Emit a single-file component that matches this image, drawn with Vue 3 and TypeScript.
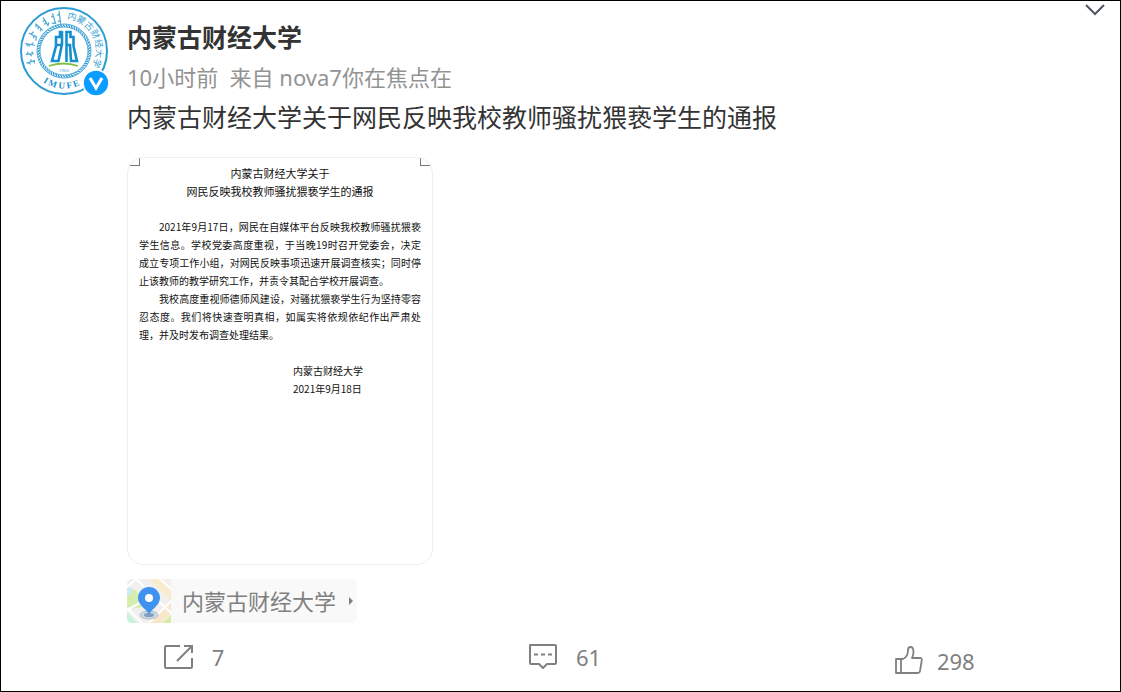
<script setup lang="ts">
interface NoticeLine {
  text: string
  indent?: boolean
  last?: boolean
}

interface ScriptWord {
  angle: number
  d: string
}

const school = '内蒙古财经大学'

const noticeTitle: string[] = ['内蒙古财经大学关于', '网民反映我校教师骚扰猥亵学生的通报']

const noticeBody: NoticeLine[] = [
  { text: '2021年9月17日，网民在自媒体平台反映我校教师骚扰猥亵', indent: true },
  { text: '学生信息。学校党委高度重视，于当晚19时召开党委会，决定' },
  { text: '成立专项工作小组，对网民反映事项迅速开展调查核实；同时停' },
  { text: '止该教师的教学研究工作，并责令其配合学校开展调查。', last: true },
  { text: '我校高度重视师德师风建设，对骚扰猥亵学生行为坚持零容', indent: true },
  { text: '忍态度。我们将快速查明真相，如属实将依规依纪作出严肃处' },
  { text: '理，并及时发布调查处理结果。', last: true },
]

const scriptWords: ScriptWord[] = [
  { angle: -108, d: 'M45 6 V14 M45 7 L43 9 M45 10 L47 11 M45 14 L43 13' },
  { angle: -95, d: 'M45 7 V14 M45 8 L47 9 M45 11 L43 12 M45 14 L47 13' },
  { angle: -79, d: 'M45 6 V15 M45 7 L43 8 M45 9 L43 10 M45 12 L47 13' },
  { angle: -63, d: 'M45 6 V14 L42 15 M45 8 L48 9 M45 11 L43 12' },
  { angle: -46, d: 'M45 6 V15 M45 6 L43 8 M45 9 L43 11 M45 13 L43 14' },
  { angle: -32, d: 'M45 6 V15 M45 8 L43 9 M45 11 L43 12 M45 15 L47 13' },
  { angle: -17, d: 'M45 6 V16 L42 15 M45 8 L43 9' },
  { angle: -7, d: 'M45 5 V17 M45 7 L43 9 M45 14 L43 15' },
]

const ringTicks: number[] = Array.from({ length: 60 }, (_, i) => i * 6)
</script>

<template>
  <main class="page">
    <button class="more" type="button" aria-label="更多">
      <svg width="22" height="14" viewBox="0 0 22 14" fill="none" stroke="#4d5866" stroke-width="2">
        <path d="M2 2 L11 11 L20 2" />
      </svg>
    </button>

    <article class="post">
      <a class="avatar" href="#" :aria-label="school">
        <svg width="90" height="90" viewBox="0 0 90 90">
          <defs>
            <path id="arc-name" d="M48 13 A32 32 0 0 1 72 62" />
            <path id="arc-code" d="M24 76 A37 37 0 0 0 70 73" />
          </defs>
          <circle cx="45" cy="45" r="43" fill="#fff" stroke="#2b9bd3" stroke-width="2" />
          <circle cx="45" cy="45" r="27" fill="none" stroke="#4aa9d9" stroke-width="1" />
          <circle cx="45" cy="45" r="24" fill="none" stroke="#6ab8e0" stroke-width="1" />
          <g stroke="#2b98d0" stroke-width="1.2">
            <path v-for="a in ringTicks" :key="a" d="M44 18.500 L46 21" :transform="`rotate(${a} 45 45)`" />
          </g>
          <g fill="none" stroke="#4ba7d6" stroke-width="1.2" stroke-linecap="round">
            <path
              v-for="word in scriptWords"
              :key="word.angle"
              :d="word.d"
              :transform="`rotate(${word.angle} 45 45)`"
            />
          </g>
          <text class="seal-name"><textPath href="#arc-name">内蒙古财经大学</textPath></text>
          <text class="seal-code"><textPath href="#arc-code">I M U F E</textPath></text>
          <g fill="none" stroke="#168fce" stroke-width="2.6">
            <path d="M43 25 V38 L39.500 55 H33 L37 40 V31 H41 V26 H43 M37 39 H43" />
            <path d="M47.500 56 V26 H51.500 V31 H54.500 V40 L58 55 H52 L51 39 H47.500" />
          </g>
          <path d="M30 60 Q44 55 59 60" fill="none" stroke="#7dbd3a" stroke-width="1.8" />
          <text class="seal-year" x="45" y="66" text-anchor="middle">1960</text>
        </svg>
        <svg class="badge" width="28" height="28" viewBox="0 0 28 28">
          <circle cx="14" cy="14" r="13" fill="#0a9dff" stroke="#fff" stroke-width="1.6" />
          <path d="M8 9 L14 19 L20 9" fill="none" stroke="#fff" stroke-width="3" />
        </svg>
      </a>

      <div class="content">
        <h1 class="name"><a href="#">{{ school }}</a></h1>
        <p class="meta">10小时前&nbsp; 来自 nova7你在焦点在</p>
        <p class="text">内蒙古财经大学关于网民反映我校教师骚扰猥亵学生的通报</p>

        <section class="notice">
          <i class="corner left"></i>
          <i class="corner right"></i>
          <h2 class="notice-title">
            <span v-for="line in noticeTitle" :key="line">{{ line }}</span>
          </h2>
          <div class="notice-body">
            <span
              v-for="line in noticeBody"
              :key="line.text"
              :class="{ indent: line.indent, last: line.last }"
            >{{ line.text }}</span>
          </div>
          <div class="signature">
            <span>{{ school }}</span>
            <span>2021年9月18日</span>
          </div>
        </section>

        <a class="place" href="#">
          <svg class="map" width="44" height="44" viewBox="0 0 44 44">
            <rect width="44" height="44" fill="#f1f0ee" />
            <path d="M0 8 Q10 9 14 20 L17 27 Q8 31 0 28 Z" fill="#d6edb0" />
            <path d="M0 6 Q5 8 5 12 Q4 16 0 16 Z" fill="#c9ebfa" />
            <path d="M22 0 H34 L44 11 V22 Z" fill="#fbebcd" />
            <path d="M22 44 L44 24 V34 L34 44 Z" fill="#f8e8c9" />
            <path d="M35 44 L44 36 V44 Z" fill="#d6edaa" />
            <path d="M0 33 L10 44 H0 Z" fill="#c5f3dc" />
            <path d="M-1 9 L10 -1 M8 -1 L44 34 M32 -1 L44 10 M0 31 L31 14 M2 31 L15 44 M22 44 L44 22" fill="none" stroke="#fff" stroke-width="2" />
            <ellipse cx="22" cy="36" rx="9" ry="4" fill="#b5c4d4" fill-opacity=".6" stroke="#aebdcb" />
            <ellipse cx="22" cy="36" rx="5" ry="2" fill="#7f9ebf" />
            <path d="M22 35 C20 31 11 26 11 19 A11 11 0 1 1 33 19 C33 26 24 31 22 35 Z" fill="#3f92ef" />
            <circle cx="22" cy="19" r="4" fill="#fff" />
          </svg>
          <span class="place-name">{{ school }}</span>
          <svg width="6" height="8" viewBox="0 0 6 8"><path d="M1 0 L5 4 L1 8 Z" fill="#808080" /></svg>
        </a>
      </div>
    </article>

    <footer class="actions">
      <button class="action" type="button" aria-label="转发 7">
        <svg width="30" height="26" viewBox="0 0 30 26" fill="none" stroke="#808080" stroke-width="2">
          <path d="M16 2 H2 Q1 2 1 3 V23 Q1 24 2 24 H27 Q28 24 28 23 V14" />
          <path d="M13 17 L28 2 M20 2 H28 V9" />
        </svg>
        <span>7</span>
      </button>
      <button class="action" type="button" aria-label="评论 61">
        <svg width="30" height="26" viewBox="0 0 30 26" fill="none" stroke="#808080" stroke-width="2">
          <path d="M2 1 H27 Q28 1 28 2 V19 Q28 20 27 20 H19 L15 24 L11 20 H3 Q2 20 2 19 Z" stroke-linejoin="round" />
          <path d="M6 10.500 H10 M13 10.500 H17 M20 10.500 H24" />
        </svg>
        <span>61</span>
      </button>
      <button class="action like" type="button" aria-label="赞 298">
        <svg width="28" height="34" viewBox="0 0 28 34" fill="none" stroke="#808080" stroke-width="1.8" stroke-linejoin="round">
          <path d="M1 15 H8 Q13 13 13 6 Q13 3 15.500 3 Q18.500 3 18.500 8 Q18.500 11 17 14 H25 Q27 14 26.800 16 L25 27 Q24.600 29 23 29 H1 Z M6 15 V29" />
        </svg>
        <span>298</span>
      </button>
    </footer>
  </main>
</template>

<style>
body {
  margin: 0;
  background: #fff;
}
</style>

<style scoped>
.page {
  position: relative;
  box-sizing: border-box;
  min-height: 100vh;
  border: 1px solid #000;
  background: #fff;
  color: #333;
  font-family: "Noto Sans", "Noto Sans CJK SC", sans-serif;
}

a {
  color: inherit;
  text-decoration: none;
}

button {
  padding: 0;
  border: 0;
  background: none;
  color: inherit;
  font: inherit;
  cursor: pointer;
}

h1,
h2,
p {
  margin: 0;
}

svg {
  display: block;
  flex: none;
}

.more {
  position: absolute;
  top: 2px;
  right: 14px;
}

.post {
  display: flex;
  gap: 18px;
  padding: 5px 18px 0;
}

.avatar {
  position: relative;
  flex: none;
  width: 90px;
  height: 90px;
}

.badge {
  position: absolute;
  right: -1px;
  bottom: -1px;
}

.seal-name {
  fill: #3b9fd3;
  font: 9px "Noto Sans CJK SC", sans-serif;
}

.seal-code {
  fill: #168fce;
  font: bold 9px "Liberation Serif", serif;
}

.seal-year {
  fill: #4da6d5;
  font: 5px "Liberation Serif", serif;
}

.content {
  flex: 1;
  min-width: 0;
  padding-top: 11px;
}

.name,
.text {
  font-size: 25px;
  line-height: 40px;
}

.name {
  font-weight: 700;
}

.meta {
  color: #939393;
  font-size: 22px;
  line-height: 40px;
}

.notice {
  position: relative;
  box-sizing: border-box;
  width: 306px;
  max-width: 100%;
  min-height: 408px;
  margin-top: 20px;
  padding: 6px 11px;
  overflow: hidden;
  border: 1px solid #eee;
  border-radius: 16px;
  color: #111;
  font-family: "Noto Sans CJK SC", sans-serif;
  font-size: 10px;
  line-height: 18px;
}

.notice span {
  display: block;
}

.corner {
  position: absolute;
  top: 0;
  box-sizing: border-box;
  width: 12px;
  height: 8px;
  border: 0 solid #777;
  border-bottom-width: 1px;
}

.corner.left {
  left: 0;
  border-right-width: 1px;
}

.corner.right {
  right: 0;
  border-left-width: 1px;
}

.notice-title {
  font-size: 11px;
  font-weight: 400;
  text-align: center;
}

.notice-body {
  margin-top: 18px;
  text-align: justify;
  text-align-last: justify;
}

.notice-body .indent {
  padding-left: 20px;
}

.notice-body .last {
  text-align-last: left;
}

.signature {
  width: fit-content;
  margin: 18px 58px 0 auto;
}

.place {
  display: flex;
  align-items: center;
  width: fit-content;
  margin-top: 14px;
  padding-right: 3px;
  overflow: hidden;
  border-radius: 5px;
  background: #f9f9f9;
  color: #808080;
  font-size: 22px;
  line-height: 44px;
}

.place-name {
  margin: 0 12px 0 11px;
}

.actions {
  display: grid;
  grid-template-columns: repeat(3, 1fr);
  align-items: start;
  margin-top: 21px;
  padding-left: 8px;
  color: #808080;
  font-size: 22px;
  line-height: 26px;
}

.action {
  display: flex;
  align-items: center;
  justify-content: center;
  gap: 18px;
}

.action.like {
  gap: 14px;
}
</style>
